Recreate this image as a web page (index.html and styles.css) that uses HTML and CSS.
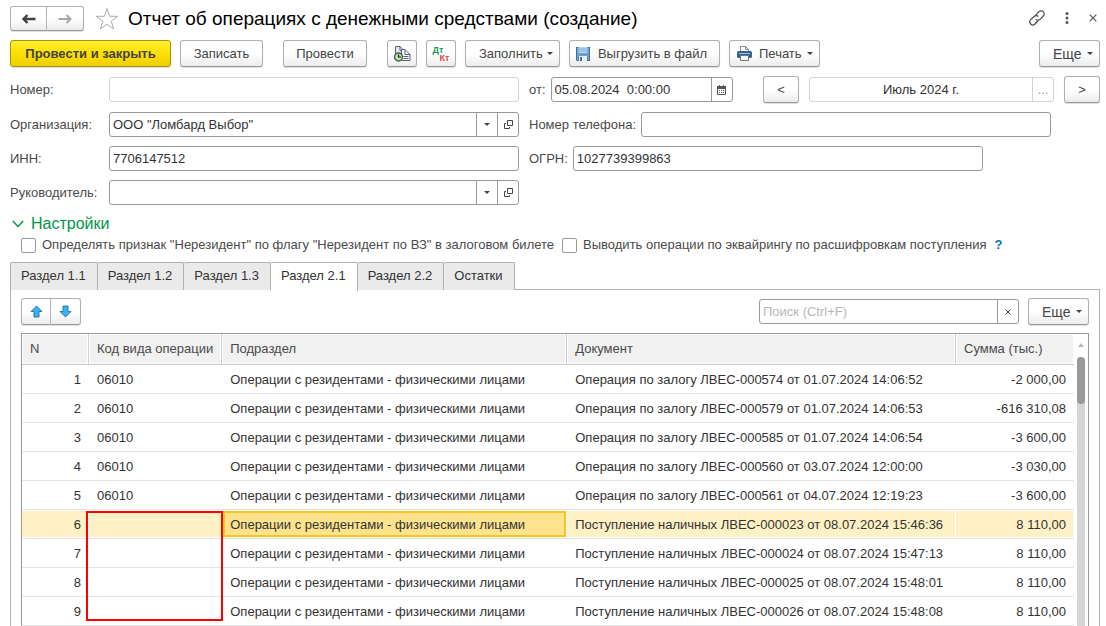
FILE: index.html
```html
<!DOCTYPE html>
<html lang="ru">
<head>
<meta charset="utf-8">
<title>Отчет об операциях с денежными средствами (создание)</title>
<link rel="stylesheet" href="styles.css">
</head>
<body>
<main class="page">
  <header class="titlebar">
    <div class="pair">
      <button class="btn nav" type="button" aria-label="Назад"><svg width="16" height="12" viewBox="0 0 16 12"><path d="M6.500 2 2.500 6 6.500 10M3 6h11.500" fill="none" stroke="#404040" stroke-width="2.400"/></svg></button>
      <button class="btn nav" type="button" aria-label="Вперед"><svg width="16" height="12" viewBox="0 0 16 12"><path d="M9.500 2 13.500 6 9.500 10M13 6H1.500" fill="none" stroke="#a8a8a8" stroke-width="2"/></svg></button>
    </div>
    <button class="plain star" type="button" aria-label="В избранное"><svg width="24" height="24" viewBox="0 0 24 24"><path d="M12 1.500 14.600 9.300H22.800L16.200 14.100 18.700 22 12 17.200 5.300 22 7.800 14.100 1.200 9.300H9.400Z" fill="#fff" stroke="#a9adb5"/></svg></button>
    <h1 class="title">Отчет об операциях с денежными средствами (создание)</h1>
    <div class="window-tools">
      <button class="plain" type="button" aria-label="Ссылка"><svg width="18" height="18" viewBox="0 0 18 18" fill="none" stroke="#4a4a4a" stroke-width="1.200"><path d="M7.500 6.300 11 2.700a3 3 0 0 1 4.300 4.300L12 10.300a3 3 0 0 1-4.300 0"/><path d="M10.300 11.500 7 15a3 3 0 0 1-4.300-4.300L6 7.500a3 3 0 0 1 4.300 0"/></svg></button>
      <button class="plain" type="button" aria-label="Меню"><svg width="4" height="14" viewBox="0 0 4 14" fill="#555"><circle cx="2" cy="2.500" r="1.500"/><circle cx="2" cy="7" r="1.500"/><circle cx="2" cy="11.500" r="1.500"/></svg></button>
      <button class="plain close" type="button" aria-label="Закрыть"><svg width="8" height="8" viewBox="0 0 8 8"><path d="M.7.7l6.600 6.600M7.300.7.7 7.300" stroke="#555" stroke-width="1.200"/></svg></button>
    </div>
  </header>

  <div class="toolbar">
    <button class="btn primary" type="button">Провести и закрыть</button>
    <button class="btn save" type="button">Записать</button>
    <button class="btn post" type="button">Провести</button>
    <button class="btn square history" type="button" aria-label="Связанные документы"><svg width="18" height="18" viewBox="0 0 18 18"><path d="M2.500 1.500H7l4 4v8H2.500z" fill="#e6eaee" stroke="#59636e"/><path d="M7 1.500v4h4" fill="none" stroke="#59636e"/><path d="M8.500 4.500H12l5 5v6H8.500z" fill="#fff" stroke="#59636e"/><path d="M12 4.500v5h5M10.500 11.500h5M10.500 13.500h5" fill="none" stroke="#59636e"/><circle cx="5.500" cy="12" r="4" fill="#b5e8a4" stroke="#4b5560" stroke-width="1.400"/><path d="M5.500 9.500V12H8" fill="none" stroke="#222" stroke-width="1.200"/></svg></button>
    <button class="btn square" type="button" aria-label="Дт Кт"><span class="dtkt"><span class="dt">Дт</span><span class="kt">Кт</span></span></button>
    <button class="btn fill" type="button">Заполнить<span class="caret"></span></button>
    <button class="btn export" type="button"><svg width="14" height="14" viewBox="0 0 14 14"><path d="M0 0h14v14H1l-1-1z" fill="#3f6f9f"/><path d="M1 1h1.500v12H1zM11.500 1H13v12h-1.500z" fill="#79a8d3"/><path d="M2.500 0h9v6.500h-9z" fill="#b5d9f5"/><path d="M3 2h8M3 4h8" stroke="#7fb0d8"/><path d="M1 6.500h12V9H1z" fill="#6f9fcb"/><path d="M3 9h8v5H3z" fill="#e8eef4"/><path d="M4 10h2v4H4z" fill="#3f6f9f"/></svg>Выгрузить в файл</button>
    <button class="btn print" type="button"><svg width="15" height="15" viewBox="0 0 15 15"><path d="M3.500 6V.5h5l3 3V6" fill="#fff" stroke="#7c8b99"/><path d="M8.500.5v3h3" fill="none" stroke="#7c8b99"/><rect y="5" width="15" height="7" rx="1.500" fill="#356391"/><path d="M2 7.500h11" stroke="#9dc3e4"/><path d="M3.500 9.500h8v5h-8z" fill="#fff" stroke="#64788c"/></svg>Печать<span class="caret"></span></button>
    <button class="btn more" type="button">Еще<span class="caret"></span></button>
  </div>

  <form class="form">
    <div class="row">
      <label class="label" for="number">Номер:</label>
      <div class="field wide muted"><input id="number" type="text"></div>
      <label for="date">от:</label>
      <div class="field date"><input id="date" type="text" value="05.08.2024  0:00:00"><button type="button" aria-label="Календарь"><svg width="9" height="10" viewBox="0 0 9 10"><path d="M.5 1.500h8v8h-8z" fill="none" stroke="#555"/><path d="M0 1h9v3H0zM2 0h1v2H2zM6 0h1v2H6z" fill="#555"/><path d="M2 5.500h5M2 7.500h5" stroke="#555" stroke-dasharray="1 1"/></svg></button></div>
      <div class="period">
        <button class="btn step" type="button">&lt;</button>
        <div class="field month muted"><input type="text" aria-label="Период" value="Июль 2024 г."><button type="button" aria-label="Выбрать период">...</button></div>
        <button class="btn step" type="button">&gt;</button>
      </div>
    </div>
    <div class="row">
      <label class="label" for="org">Организация:</label>
      <div class="field wide"><input id="org" type="text" value='ООО "Ломбард Выбор"'><button type="button" aria-label="Выбрать"><span class="caret"></span></button><button type="button" aria-label="Открыть"><svg width="9" height="9" viewBox="0 0 9 9"><path d="M3.500.5h5v5h-5zM2 3.500H.5v5h5V7" fill="none" stroke="#444"/></svg></button></div>
      <label for="phone">Номер телефона:</label>
      <div class="field wide"><input id="phone" type="text"></div>
    </div>
    <div class="row">
      <label class="label" for="inn">ИНН:</label>
      <div class="field wide"><input id="inn" type="text" value="7706147512"></div>
      <label for="ogrn">ОГРН:</label>
      <div class="field wide"><input id="ogrn" type="text" value="1027739399863"></div>
    </div>
    <div class="row">
      <label class="label" for="head">Руководитель:</label>
      <div class="field wide"><input id="head" type="text"><button type="button" aria-label="Выбрать"><span class="caret"></span></button><button type="button" aria-label="Открыть"><svg width="9" height="9" viewBox="0 0 9 9"><path d="M3.500.5h5v5h-5zM2 3.500H.5v5h5V7" fill="none" stroke="#444"/></svg></button></div>
    </div>
  </form>

  <button class="plain group" type="button"><svg width="12" height="8" viewBox="0 0 12 8"><path d="M.8 1 6 6.500 11.200 1" fill="none" stroke="#00964a" stroke-width="1.500"/></svg>Настройки</button>
  <div class="checks">
    <label class="check"><input type="checkbox">Определять признак "Нерезидент" по флагу "Нерезидент по ВЗ" в залоговом билете</label>
    <label class="check"><input type="checkbox">Выводить операции по эквайрингу по расшифровкам поступления</label>
    <a class="help" href="#">?</a>
  </div>

  <nav class="tabs">
    <button class="tab" type="button">Раздел 1.1</button>
    <button class="tab" type="button">Раздел 1.2</button>
    <button class="tab" type="button">Раздел 1.3</button>
    <button class="tab active" type="button">Раздел 2.1</button>
    <button class="tab" type="button">Раздел 2.2</button>
    <button class="tab" type="button">Остатки</button>
  </nav>

  <section class="panel">
    <div class="panel-tools">
      <div class="pair">
        <button class="btn move" type="button" aria-label="Вверх"><svg width="13" height="13" viewBox="0 0 13 13"><path d="M6.500 1 12 6.500H9v5.500H4V6.500H1z" fill="#3db1f0" stroke="#2a7fae"/></svg></button>
        <button class="btn move" type="button" aria-label="Вниз"><svg width="13" height="13" viewBox="0 0 13 13"><path d="M6.500 12 1 6.500h3V1h5v5.500h3z" fill="#3db1f0" stroke="#2a7fae"/></svg></button>
      </div>
      <div class="field search"><input type="text" aria-label="Поиск" placeholder="Поиск (Ctrl+F)"><button type="button" aria-label="Очистить"><svg width="6" height="6" viewBox="0 0 6 6"><path d="M.5.5l5 5M5.500.5l-5 5" stroke="#444"/></svg></button></div>
      <button class="btn more" type="button">Еще<span class="caret"></span></button>
    </div>
    <div class="grid">
      <table class="table">
        <colgroup><col class="c-n"><col class="c-code"><col class="c-dep"><col><col class="c-sum"></colgroup>
        <thead><tr><th>N</th><th>Код вида операции</th><th>Подраздел</th><th>Документ</th><th>Сумма (тыс.)</th></tr></thead>
        <tbody>
          <tr><td class="num">1</td><td>06010</td><td>Операции с резидентами - физическими лицами</td><td>Операция по залогу ЛВЕС-000574 от 01.07.2024 14:06:52</td><td class="num">-2 000,00</td></tr>
          <tr><td class="num">2</td><td>06010</td><td>Операции с резидентами - физическими лицами</td><td>Операция по залогу ЛВЕС-000579 от 01.07.2024 14:06:53</td><td class="num">-616 310,08</td></tr>
          <tr><td class="num">3</td><td>06010</td><td>Операции с резидентами - физическими лицами</td><td>Операция по залогу ЛВЕС-000585 от 01.07.2024 14:06:54</td><td class="num">-3 600,00</td></tr>
          <tr><td class="num">4</td><td>06010</td><td>Операции с резидентами - физическими лицами</td><td>Операция по залогу ЛВЕС-000560 от 03.07.2024 12:00:00</td><td class="num">-3 030,00</td></tr>
          <tr><td class="num">5</td><td>06010</td><td>Операции с резидентами - физическими лицами</td><td>Операция по залогу ЛВЕС-000561 от 04.07.2024 12:19:23</td><td class="num">-3 600,00</td></tr>
          <tr class="selected"><td class="num">6</td><td class="anchor"><span class="marker"></span></td><td class="current">Операции с резидентами - физическими лицами</td><td>Поступление наличных ЛВЕС-000023 от 08.07.2024 15:46:36</td><td class="num">8 110,00</td></tr>
          <tr><td class="num">7</td><td></td><td>Операции с резидентами - физическими лицами</td><td>Поступление наличных ЛВЕС-000024 от 08.07.2024 15:47:13</td><td class="num">8 110,00</td></tr>
          <tr><td class="num">8</td><td></td><td>Операции с резидентами - физическими лицами</td><td>Поступление наличных ЛВЕС-000025 от 08.07.2024 15:48:01</td><td class="num">8 110,00</td></tr>
          <tr><td class="num">9</td><td></td><td>Операции с резидентами - физическими лицами</td><td>Поступление наличных ЛВЕС-000026 от 08.07.2024 15:48:08</td><td class="num">8 110,00</td></tr>
        </tbody>
      </table>
      <div class="scroll"><span class="scroll-up"></span><div class="track"><div class="thumb"></div></div></div>
    </div>
  </section>
</main>
</body>
</html>
```

FILE: styles.css
```css
* { box-sizing: border-box; }
body {
  margin: 0;
  background: #fff;
  color: #333;
  font: 13px/16px "Liberation Sans", Arial, sans-serif;
}
button, input { font: inherit; color: inherit; }
svg { flex: none; }
.page {
  display: flex;
  flex-direction: column;
  height: 100vh;
  padding: 6px 6px 0 10px;
  overflow: hidden;
}

/* Buttons */
.btn {
  display: flex;
  align-items: center;
  justify-content: center;
  height: 27px;
  padding: 0 5px;
  border: 1px solid #b0b0b0;
  border-bottom-color: #999;
  border-radius: 3px;
  background: linear-gradient(#fff 50%, #ececec);
  box-shadow: 0 1px 1px #ddd;
  color: #444;
  white-space: nowrap;
}
.plain {
  display: flex;
  align-items: center;
  padding: 0;
  border: 0;
  background: none;
}
.pair { display: flex; }
.pair .btn:first-child { border-radius: 3px 0 0 3px; }
.pair .btn:last-child { border-left: 0; border-radius: 0 3px 3px 0; }
.caret {
  border: 3px solid transparent;
  border-top-color: #444;
  border-bottom: 0;
}
.btn .caret { margin-left: auto; }

/* Title bar */
.titlebar { display: flex; align-items: center; height: 25px; }
.nav { width: 37px; height: 25px; }
.star { margin-left: 11px; }
.title {
  margin: 0 0 0 9px;
  color: #000;
  font-size: 19px;
  font-weight: 400;
  line-height: 24px;
  white-space: nowrap;
}
.window-tools {
  display: flex;
  align-items: center;
  gap: 20px;
  margin: 0 3px 2px auto;
}
.window-tools .plain:first-child { margin-right: -1px; }

/* Toolbar */
.toolbar { display: flex; gap: 9px; margin-top: 9px; }
.primary {
  width: 161px;
  border-color: #a89400;
  background: linear-gradient(#ffee33, #ffe000 50%, #efcf00);
  font-weight: 700;
}
.save { width: 83px; }
.post { width: 84px; margin-left: 11px; }
.square { width: 30px; padding: 0; }
.history { margin-left: 11px; }
.dtkt {
  display: flex;
  flex-direction: column;
  width: 17px;
  font-size: 9px;
  font-weight: 700;
  line-height: 8px;
}
.dt { align-self: flex-start; color: #0a9a50; }
.kt { align-self: flex-end; color: #e0483e; }
.fill { width: 95px; padding: 0 6px 0 13px; }
.export { width: 151px; gap: 8px; padding: 0 13px 0 7px; }
.print { width: 91px; padding: 0 6px 0 7px; }
.print svg { margin-right: 7px; }
.more { width: 61px; padding: 0 6px 0 13px; font-size: 14px; }
.toolbar .more { margin-left: auto; }

/* Form */
.form { display: flex; flex-direction: column; gap: 9px; margin-top: 10px; }
.row { display: flex; align-items: center; gap: 5px; height: 25px; }
.row:first-child { margin-bottom: 1px; }
.row label { color: #4a4a4a; white-space: nowrap; }
.row .label { flex: none; width: 94px; }
.row .field + label { margin-left: 5px; }
.field {
  display: flex;
  height: 25px;
  border: 1px solid #999;
  border-radius: 3px;
  background: #fff;
}
.field input {
  flex: 1;
  min-width: 0;
  padding: 0 3px;
  border: 0;
  outline: 0;
  background: none;
  white-space: pre;
}
.field button {
  display: flex;
  flex: none;
  align-items: center;
  justify-content: center;
  width: 21px;
  padding: 0;
  border: 0;
  border-left: 1px solid #999;
  background: none;
}
.muted, .muted button { border-color: #d4d4d4; }
.muted button { color: #999; }
.wide { flex: 0 1 410px; }
.date { flex: none; width: 182px; }
.period { display: flex; align-items: center; gap: 10px; margin-left: auto; }
.month { width: 245px; }
.month input { text-align: center; }
.step { width: 36px; }

/* Settings group */
.group {
  gap: 7px;
  align-self: flex-start;
  margin: 9px 0 0 2px;
  color: #00964a;
  font-size: 16px;
  line-height: 20px;
}
.checks {
  display: flex;
  align-items: center;
  gap: 8px;
  margin: 3px 0 0 11px;
  color: #4a4a4a;
  white-space: nowrap;
}
.check { display: flex; align-items: center; gap: 6px; }
.check input {
  appearance: none;
  width: 15px;
  height: 15px;
  margin: 0;
  border: 1px solid #999;
  border-radius: 2px;
  background: #fff;
}
.help { color: #0071bc; font-weight: 700; text-decoration: none; }

/* Tabs */
.tabs { position: relative; display: flex; margin-top: 9px; }
.tab {
  height: 28px;
  padding: 0 11px 2px 10px;
  border: 1px solid #b0b0b0;
  border-width: 1px 1px 0 0;
  border-radius: 2px 2px 0 0;
  background: #eaeaea;
}
.tab:first-child { border-left-width: 1px; }
.tab.active {
  height: 29px;
  margin-bottom: -1px;
  padding-bottom: 3px;
  background: #fff;
}

/* Panel */
.panel {
  display: flex;
  flex: 1;
  flex-direction: column;
  min-height: 0;
  margin-top: -1px;
  padding: 8px 10px 0;
  border: 1px solid #b0b0b0;
  border-bottom: 0;
}
.panel-tools { display: flex; align-items: center; }
.move { width: 30px; }
.search { width: 260px; margin: 0 9px 0 auto; }
.search input::placeholder { color: #b8b8b8; opacity: 1; }
.grid {
  display: flex;
  flex: 1;
  min-height: 0;
  margin-top: 8px;
  border: 1px solid #999;
  border-bottom: 0;
}
.table {
  flex: 1;
  align-self: flex-start;
  min-width: 0;
  table-layout: fixed;
  border-spacing: 0;
}
.c-n { width: 67px; }
.c-code { width: 133px; }
.c-dep { width: 345px; }
.c-sum { width: 118px; }
.table th, .table td { padding: 0 8px; text-align: left; white-space: nowrap; }
.table th {
  height: 31px;
  border-right: 1px solid #d0d0d0;
  border-bottom: 1px solid #c8c8c8;
  background: #f1f1f1;
  box-shadow: inset 0 0 0 1px #fff;
  color: #4a4a4a;
  font-weight: 400;
}
.table th:last-child { border-right: 0; }
.table td { height: 29px; padding-top: 2px; border-bottom: 1px solid #e4e4e4; }
.table .num { text-align: right; }
.selected td {
  background: #fdf1c5;
  box-shadow: inset -1px 0 #fff, inset 0 1px #fff, inset 0 -1px #fff;
}
.table .current {
  background: #fde38d;
  box-shadow: inset -1px 0 #fff, inset 0 1px #fff, inset 0 -1px #fff, inset 0 0 0 3px #f8c51f;
}
.anchor { position: relative; }
.marker {
  position: absolute;
  top: 1px;
  right: -1px;
  left: -3px;
  z-index: 1;
  height: 110px;
  border: 2px solid #f00;
}
.scroll {
  display: flex;
  flex: none;
  flex-direction: column;
  align-items: center;
  width: 14px;
  padding-top: 9px;
}
.scroll-up {
  border: 3px solid transparent;
  border-top: 0;
  border-bottom: 4px solid #b8b8b8;
}
.track {
  flex: 1;
  width: 8px;
  margin-top: 10px;
  border-radius: 4px 4px 0 0;
  background: #d6d6d6;
}
.thumb { height: 47px; border-radius: 4px; background: #999; }
```
